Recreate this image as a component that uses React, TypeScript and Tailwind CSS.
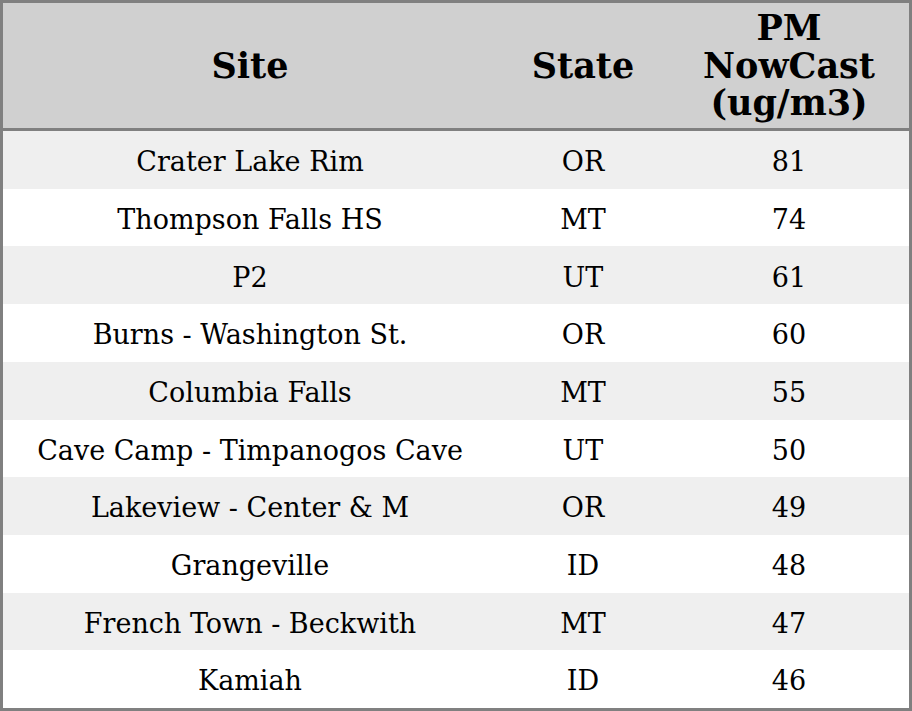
const rows: [string, string, number][] = [
  ['Crater Lake Rim', 'OR', 81],
  ['Thompson Falls HS', 'MT', 74],
  ['P2', 'UT', 61],
  ['Burns - Washington St.', 'OR', 60],
  ['Columbia Falls', 'MT', 55],
  ['Cave Camp - Timpanogos Cave', 'UT', 50],
  ['Lakeview - Center & M', 'OR', 49],
  ['Grangeville', 'ID', 48],
  ['French Town - Beckwith', 'MT', 47],
  ['Kamiah', 'ID', 46],
];

export default function App() {
  return (
    <div className="w-[912px] h-[711px] bg-white" style={{ fontFamily: '"DejaVu Serif", serif' }}>
      <div className="h-full border-[3px] border-[#808080] flex flex-col text-black">
        <div className="h-[128px] shrink-0 flex items-center bg-[#d0d0d0] border-b-[3px] border-[#808080] font-bold text-[35px] leading-[37.5px] text-center">
          <div className="w-[494px]">Site</div>
          <div className="w-[172px]">State</div>
          <div className="flex-1">
            PM
            <br />
            NowCast
            <br />
            (ug/m3)
          </div>
        </div>
        <div className="flex-1 flex flex-col">
          {rows.map(([site, state, pm], i) => (
            <div
              key={site}
              className={`flex-1 flex items-center pt-[5px] text-center text-[27px] ${i % 2 === 0 ? 'bg-[#efefef]' : 'bg-white'}`}
            >
              <div className="w-[494px]">{site}</div>
              <div className="w-[172px]">{state}</div>
              <div className="flex-1">{pm}</div>
            </div>
          ))}
        </div>
      </div>
    </div>
  );
}
